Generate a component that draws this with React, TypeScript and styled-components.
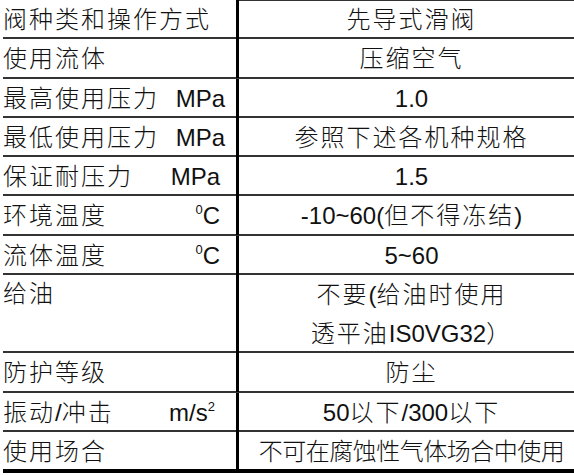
import React from "react";
import styled, { createGlobalStyle } from "styled-components";

const Global = createGlobalStyle`
  html, body {
    margin: 0;
    padding: 0;
    background: #ffffff;
    overflow: hidden;
  }
  body {
    font-family: "Liberation Sans", "Noto Sans CJK SC", sans-serif;
    color: #111111;
  }
`;

const Table = styled.div`
  margin-left: 3px;
  width: 581px;
  display: flex;
  flex-direction: column;
`;

const Row = styled.div<{ $h: number; $last?: boolean }>`
  display: grid;
  grid-template-columns: 236px 1fr;
  height: ${(p) => p.$h}px;
  box-sizing: border-box;
  border-bottom: ${(p) => (p.$last ? "4px solid #000" : "2px solid #333")};
`;

const Label = styled.div<{ $pr?: number; $top?: boolean }>`
  box-sizing: border-box;
  border-right: 3px solid #000;
  display: flex;
  align-items: ${(p) => (p.$top ? "flex-start" : "center")};
  justify-content: space-between;
  padding-right: ${(p) => p.$pr ?? 12}px;
  font-size: 24px;
  line-height: 37px;
  white-space: nowrap;
`;

const Unit = styled.span<{ $size?: number }>`
  font-size: ${(p) => p.$size ?? 24}px;
  letter-spacing: 0;
`;

const Sup = styled.sup`
  font-size: 13px;
  line-height: 0;
  vertical-align: 0;
  position: relative;
  top: -10px;
  letter-spacing: 0;
`;

const Value = styled.div<{ $first?: boolean }>`
  display: flex;
  flex-direction: column;
  align-items: center;
  justify-content: center;
  font-size: 24px;
  line-height: 39px;
  white-space: nowrap;
  box-shadow: ${(p) => (p.$first ? "inset 0 1px 0 #333" : "none")};
`;

const Run = styled.span<{ $latin?: boolean; $ls: number }>`
  font-weight: ${(p) => (p.$latin ? 400 : 300)};
  letter-spacing: ${(p) => (p.$latin ? 0 : p.$ls)}px;
`;

function Txt({ text, ls = 2 }: { text: string; ls?: number }) {
  const parts = text.match(/[\x20-\x7e]+|[^\x20-\x7e]+/g) ?? [];
  return (
    <span>
      {parts.map((p, i) => (
        <Run key={i} $latin={/^[\x20-\x7e]/.test(p)} $ls={ls}>
          {p}
        </Run>
      ))}
    </span>
  );
}

type RowData = {
  label: string;
  unit?: React.ReactNode;
  pr?: number;
  value: string[];
  h?: number;
  ls?: number;
  top?: boolean;
};

const rows: RowData[] = [
  { label: "阀种类和操作方式", value: ["先导式滑阀"] },
  { label: "使用流体", value: ["压缩空气"] },
  { label: "最高使用压力", unit: <Unit>MPa</Unit>, pr: 11, value: ["1.0"] },
  { label: "最低使用压力", unit: <Unit>MPa</Unit>, pr: 11, value: ["参照下述各机种规格"] },
  { label: "保证耐压力", unit: <Unit>MPa</Unit>, pr: 16, value: ["1.5"] },
  {
    label: "环境温度",
    unit: (
      <Unit>
        <Sup>0</Sup>C
      </Unit>
    ),
    pr: 16,
    value: ["-10~60(但不得冻结)"],
  },
  {
    label: "流体温度",
    unit: (
      <Unit>
        <Sup>0</Sup>C
      </Unit>
    ),
    pr: 16,
    value: ["5~60"],
  },
  {
    label: "给油",
    top: true,
    h: 78.5,
    value: ["不要(给油时使用", "透平油IS0VG32）"],
  },
  { label: "防护等级", value: ["防尘"] },
  {
    label: "振动/冲击",
    unit: (
      <Unit>
        m/s<Sup>2</Sup>
      </Unit>
    ),
    pr: 21,
    value: ["50以下/300以下"],
  },
  { label: "使用场合", value: ["不可在腐蚀性气体场合中使用"], ls: -0.5, h: 41.25 },
];

export default function App() {
  return (
    <>
      <Global />
      <Table>
        {rows.map((r, i) => (
          <Row key={i} $h={r.h ?? 39.25} $last={i === rows.length - 1}>
            <Label $pr={r.pr} $top={r.top}>
              <Txt text={r.label} />
              {r.unit}
            </Label>
            <Value $first={i === 0}>
              {r.value.map((v, j) => (
                <Txt key={j} text={v} ls={r.ls ?? 2} />
              ))}
            </Value>
          </Row>
        ))}
      </Table>
    </>
  );
}
